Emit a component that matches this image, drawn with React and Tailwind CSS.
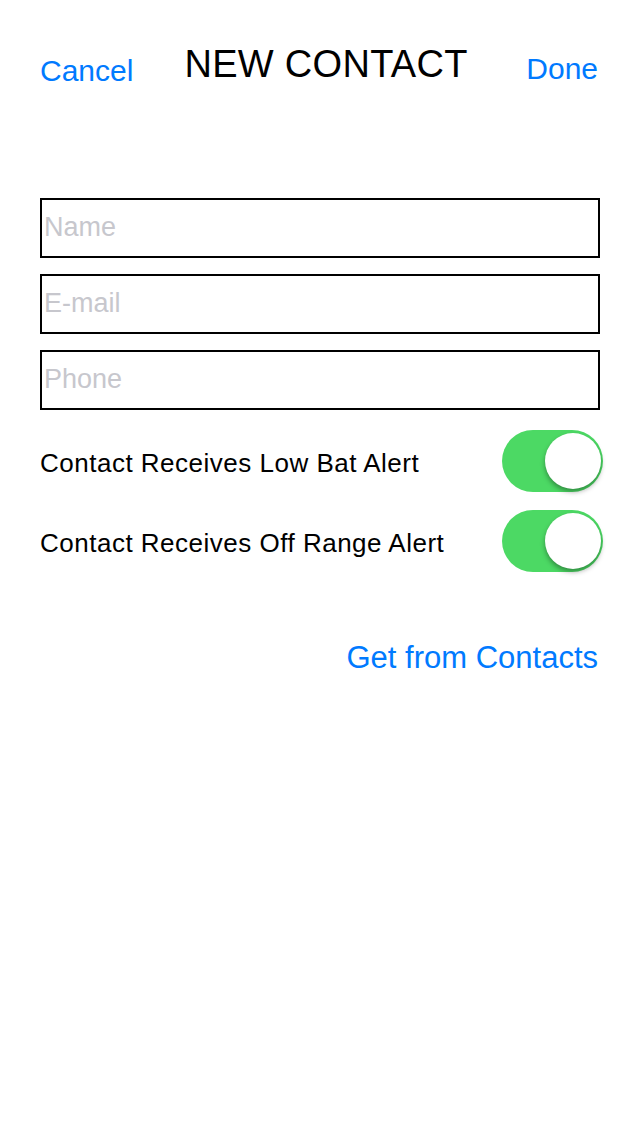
import React from "react";

function Toggle() {
  return (
    <div className="relative w-[101px] h-[62px] rounded-full bg-[#4cd964] -mr-[3px] shrink-0">
      <div className="absolute left-[43px] top-[3px] w-[56px] h-[56px] rounded-full bg-white shadow-[0_3px_5px_rgba(0,0,0,0.35)]"></div>
    </div>
  );
}

export default function App() {
  return (
    <div
      className="w-[640px] h-[1136px] bg-white text-black"
      style={{ fontFamily: '"Liberation Sans", Arial, Helvetica, sans-serif' }}
    >
      <div className="flex items-start px-[40px]">
        <div className="mt-[56px] text-[30px] leading-[30px] text-[#007aff]">Cancel</div>
        <div className="mt-[45px] ml-[51px] text-[38px] leading-[38px] tracking-[0.3px]">NEW CONTACT</div>
        <div className="mt-[54px] ml-auto mr-[2px] text-[30px] leading-[30px] text-[#007aff]">Done</div>
      </div>

      <div className="mt-[112px] mx-[40px] flex flex-col gap-[16px]">
        {["Name", "E-mail", "Phone"].map((p) => (
          <input
            key={p}
            placeholder={p}
            className="w-full h-[60px] border-2 border-black pl-[2px] pb-[1px] text-[27px] outline-none placeholder:text-[#c7c7cd]"
          />
        ))}
      </div>

      <div className="mt-[20px] mx-[40px] flex flex-col gap-[18px]">
        {["Contact Receives Low Bat Alert", "Contact Receives Off Range Alert"].map((t) => (
          <div key={t} className="flex items-center justify-between h-[62px]">
            <div className="text-[26px] leading-[26px] pt-[4px] tracking-[0.5px]">{t}</div>
            <Toggle />
          </div>
        ))}
      </div>

      <div className="mt-[70px] mx-[40px] flex justify-end">
        <div className="mr-[2px] text-[31px] leading-[31px] text-[#007aff]">Get from Contacts</div>
      </div>
    </div>
  );
}
